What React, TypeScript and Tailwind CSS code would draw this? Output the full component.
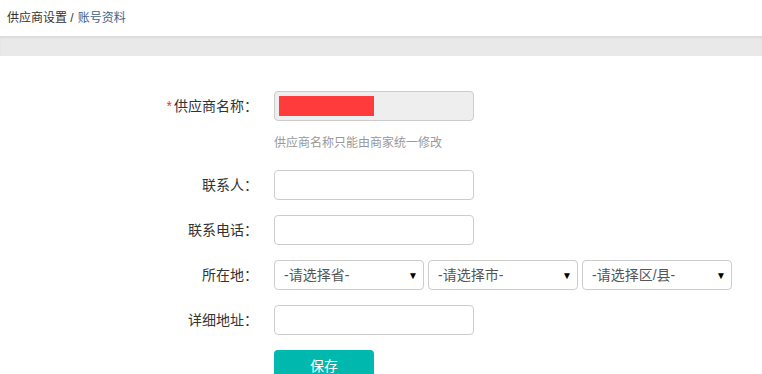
import React from 'react'

const font = { fontFamily: '"Liberation Sans", "Noto Sans CJK SC", sans-serif' }

function Label({ text, required }: { text: string; required?: boolean }) {
  return (
    <div className="w-[258px] shrink-0 text-right text-[14px] text-[#333]">
      {required && <span className="text-[#e33] mr-[2px]">*</span>}
      {text}：
    </div>
  )
}

function Select({ text }: { text: string }) {
  return (
    <div className="relative w-[150px] h-[30px] border border-[#ccc] rounded-[4px] bg-white flex items-center pl-[9px] text-[14px] text-[#555]">
      {text}
      <span className="absolute right-[5px] top-[7px] text-[10px] text-black">▼</span>
    </div>
  )
}

export default function App() {
  return (
    <div className="w-[762px] h-[374px] overflow-hidden bg-white" style={font}>
      <div className="h-9 flex items-center px-[7px] text-[12px] text-[#333]">
        供应商设置 / <span className="ml-1 text-[#41648a]">账号资料</span>
      </div>
      <div className="h-5 bg-[#e9e9e9] shadow-[inset_0_2px_2px_rgba(0,0,0,0.06)]" />

      <div className="pt-[35px]">
        <div className="flex items-center gap-4">
          <Label text="供应商名称" required />
          <div className="w-[200px] h-[30px] border border-[#ccc] rounded-[4px] bg-[#eee] flex items-center pl-[4px]">
            <div className="w-[95px] h-[20px] bg-[#ff3b3b]" />
          </div>
        </div>
        <div className="ml-[274px] mt-[15px] text-[12px] leading-[14px] text-[#999]">供应商名称只能由商家统一修改</div>

        <div className="flex items-center gap-4 mt-[20px]">
          <Label text="联系人" />
          <div className="w-[200px] h-[30px] border border-[#ccc] rounded-[4px]" />
        </div>
        <div className="flex items-center gap-4 mt-[15px]">
          <Label text="联系电话" />
          <div className="w-[200px] h-[30px] border border-[#ccc] rounded-[4px]" />
        </div>
        <div className="flex items-center gap-4 mt-[15px]">
          <Label text="所在地" />
          <div className="flex gap-1">
            <Select text="-请选择省-" />
            <Select text="-请选择市-" />
            <Select text="-请选择区/县-" />
          </div>
        </div>
        <div className="flex items-center gap-4 mt-[15px]">
          <Label text="详细地址" />
          <div className="w-[200px] h-[30px] border border-[#ccc] rounded-[4px]" />
        </div>
        <div className="ml-[274px] mt-[15px] w-[100px] h-[32px] rounded-[4px] bg-[#00b8ae] text-white text-[14px] flex items-center justify-center">
          保存
        </div>
      </div>
    </div>
  )
}
